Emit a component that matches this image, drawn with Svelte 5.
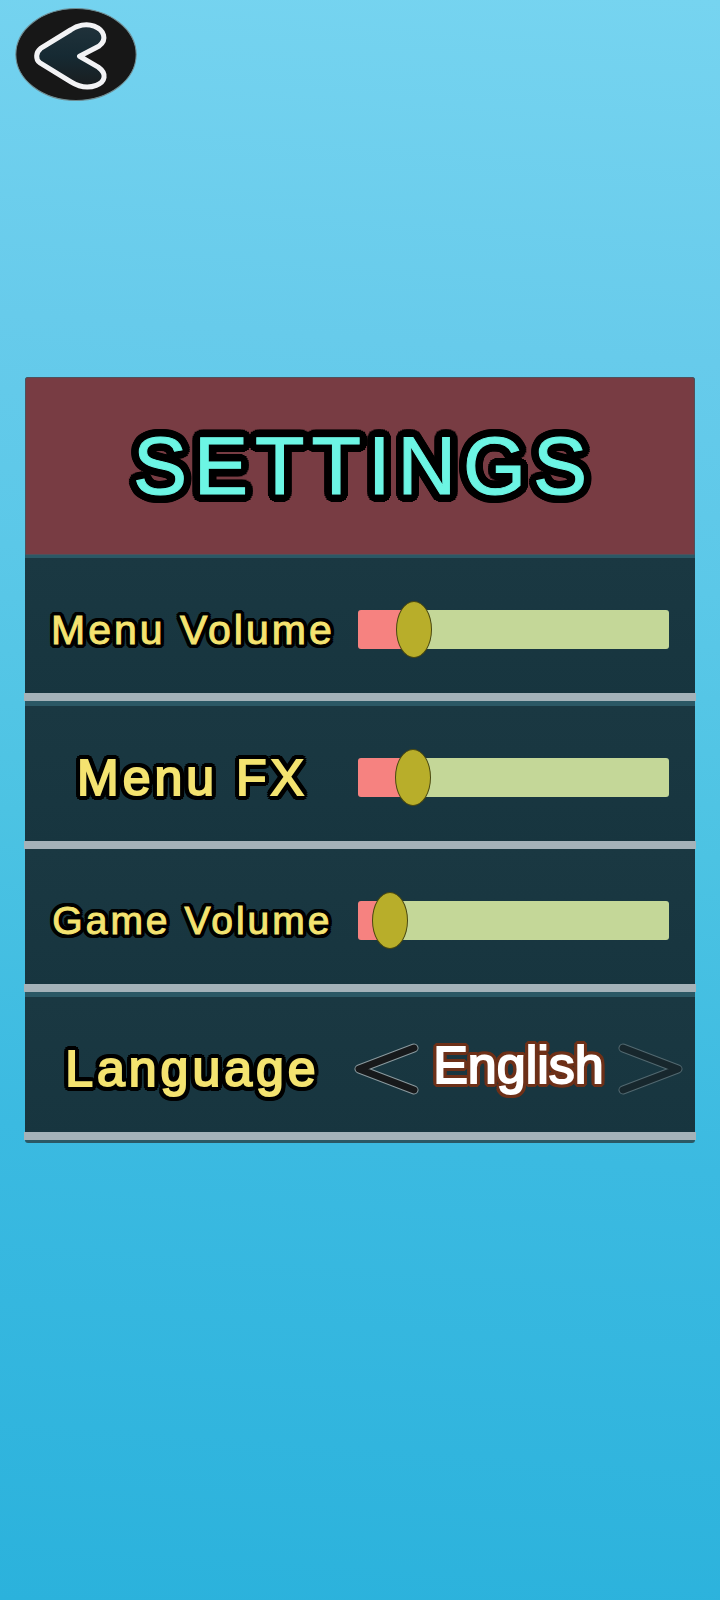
<script>
    //* local reactive variables
    let volumes = [
        {id: 'menu-volume', label: 'Menu Volume', size: 'medium', value: 13.8},
        {id: 'menu-fx', label: 'Menu FX', size: 'large', value: 13.4},
        {id: 'game-volume', label: 'Game Volume', size: 'small', value: 5.1},
    ];

    const languages = ['English', 'Deutsch', 'Español'];
    let current = 0;

    //* event handlers
    function step(offset) {
        current = (current + offset + languages.length) % languages.length;
    }
</script>

<main>
    <button type="button" class="back" aria-label="Back">
        <svg viewBox="0 0 120 92">
            <defs>
                <linearGradient id="back-fill" x1="0" y1="0" x2="0" y2="1">
                    <stop offset="0" stop-color="#20323b" />
                    <stop offset="0.5" stop-color="#162a33" />
                    <stop offset="1" stop-color="#191d1f" />
                </linearGradient>
            </defs>
            <ellipse cx="60" cy="46" rx="59.5" ry="45.5" fill="#171717" stroke="#6f8c92" />
            <path
                d="M25 40 L55 21.5 C61 17.500 70 15 78 18 C88 22 91 31 83 37.500 L63.500 47.700 L82 58.500 C91 65 89 73 80 76.500 C72 79.500 63 78 55 73 L24 54 C20 51 20 44 25 40 Z"
                fill="url(#back-fill)"
                stroke="#f3f3f5"
                stroke-width="5"
                stroke-linejoin="round"
            />
        </svg>
    </button>

    <section class="panel">
        <header>
            <h1>SETTINGS</h1>
        </header>

        {#each volumes as item (item.id)}
            <div class="row" class:joined={item.id === 'game-volume'}>
                <label class="name {item.size}" for={item.id}>{item.label}</label>
                <input
                    id={item.id}
                    type="range"
                    min="0"
                    max="100"
                    step="0.1"
                    bind:value={item.value}
                    style="--level: {item.value}%"
                />
            </div>
        {/each}

        <div class="row">
            <span class="name large" id="language">Language</span>
            <div class="picker" role="group" aria-labelledby="language">
                <button type="button" aria-label="Previous language" on:click={() => step(-1)}>
                    <svg viewBox="0 0 66 52">
                        <path class="edge" d="M61 5 L6 26 L61 47" />
                        <path class="core" d="M61 5 L6 26 L61 47" />
                    </svg>
                </button>
                <output>{languages[current]}</output>
                <button type="button" class="faded" aria-label="Next language" on:click={() => step(1)}>
                    <svg viewBox="0 0 66 52">
                        <path class="edge" d="M5 5 L60 26 L5 47" />
                        <path class="core" d="M5 5 L60 26 L5 47" />
                    </svg>
                </button>
            </div>
        </div>
    </section>
</main>

<style>
    :global(body) {
        margin: 0;
        font-family: "Liberation Sans", Arial, sans-serif;
    }

    main {
        box-sizing: border-box;
        min-height: 100vh;
        padding: 8px 25px;
        background: linear-gradient(184deg, #76d4f0, #67cbeb 22%, #5bc8e8 36%, #4cc3e3 52%, #3bbae1 71%, #2bb2dc);
    }

    button {
        padding: 0;
        border: 0;
        background: none;
        cursor: pointer;
    }

    svg {
        display: block;
        width: 100%;
    }

    .back {
        display: block;
        width: 122px;
        margin-left: -10px;
    }

    .back svg {
        height: 93px;
    }

    .panel {
        display: flex;
        flex-direction: column;
        gap: 5px;
        margin-top: 276px;
        padding-bottom: 3px;
        border-radius: 3px;
        background: #2b5865;
    }

    header {
        display: flex;
        align-items: center;
        justify-content: center;
        height: 176px;
        margin-bottom: -2px;
        padding-left: 7px;
        border: solid 1px #50505b;
        border-radius: 3px 3px 0 0;
        background: #783c43;
    }

    h1 {
        margin: 0;
        color: #6cf5e4;
        font-size: 81px;
        font-weight: 400;
        line-height: 92px;
        letter-spacing: 7px;
        -webkit-text-stroke: 1px #6cf5e4;
        text-shadow:
            8px 0 #000, -8px 0 #000, 0 8px #000, 0 -8px #000,
            8px 2px #000, 8px -2px #000, -8px 2px #000, -8px -2px #000,
            7px 4px #000, 7px -4px #000, -7px 4px #000, -7px -4px #000,
            6px 6px #000, 6px -6px #000, -6px 6px #000, -6px -6px #000,
            4px 7px #000, 4px -7px #000, -4px 7px #000, -4px -7px #000,
            2px 8px #000, 2px -8px #000, -2px 8px #000, -2px -8px #000,
            4px 0 #000, -4px 0 #000, 0 4px #000, 0 -4px #000;
    }

    .row {
        position: relative;
        display: grid;
        grid-template-columns: minmax(0, 10fr) minmax(0, 11fr);
        gap: 24px;
        align-items: center;
        height: 143px;
        padding: 0 26px;
        background: linear-gradient(#1a3842, #17353f);
    }

    .row.joined {
        margin-top: -5px;
    }

    .row::after {
        content: "";
        position: absolute;
        right: -1px;
        bottom: 0;
        left: -1px;
        height: 8px;
        background: #a4b2b9;
    }

    .name {
        color: #f4e370;
        line-height: 56px;
        letter-spacing: 3px;
        text-align: center;
        white-space: nowrap;
        -webkit-text-stroke: 1px #f4e370;
        text-shadow:
            4px 0 #000, -4px 0 #000, 0 4px #000, 0 -4px #000,
            4px 2px #000, 4px -2px #000, -4px 2px #000, -4px -2px #000,
            3px 3px #000, 3px -3px #000, -3px 3px #000, -3px -3px #000,
            2px 4px #000, 2px -4px #000, -2px 4px #000, -2px -4px #000,
            2px 0 #000, -2px 0 #000, 0 2px #000, 0 -2px #000;
    }

    .small {
        font-size: 39px;
    }

    .medium {
        font-size: 41px;
    }

    .large {
        font-size: 50px;
        letter-spacing: 4px;
        -webkit-text-stroke: 2px #f4e370;
        text-shadow:
            5px 0 #000, -5px 0 #000, 0 5px #000, 0 -5px #000,
            5px 2px #000, 5px -2px #000, -5px 2px #000, -5px -2px #000,
            4px 4px #000, 4px -4px #000, -4px 4px #000, -4px -4px #000,
            2px 5px #000, 2px -5px #000, -2px 5px #000, -2px -5px #000,
            2px 0 #000, -2px 0 #000, 0 2px #000, 0 -2px #000;
    }

    input {
        width: 100%;
        height: 56px;
        margin: 0;
        background: none;
        appearance: none;
        cursor: pointer;
    }

    input::-webkit-slider-runnable-track {
        height: 39px;
        border-radius: 3px;
        background: linear-gradient(90deg, #f68280 calc(var(--level) + 12px), #c4d798 calc(var(--level) + 12px));
    }

    input::-webkit-slider-thumb {
        box-sizing: border-box;
        width: 36px;
        height: 57px;
        margin-top: -9px;
        border: solid 1px #4a4810;
        border-radius: 50%;
        background: #b8ae2a;
        appearance: none;
    }

    .picker {
        display: flex;
        align-items: center;
        justify-content: space-between;
        margin: 0 -15px 0 -5px;
    }

    .picker button {
        flex: none;
        width: 66px;
    }

    .picker path {
        fill: none;
        stroke-linecap: round;
        stroke-linejoin: round;
    }

    .edge {
        stroke: #8b9a9f;
        stroke-width: 9px;
    }

    .core {
        stroke: #17191b;
        stroke-width: 7px;
    }

    .faded {
        opacity: 0.5;
    }

    output {
        padding-bottom: 8px;
        color: #fff;
        font-size: 52px;
        line-height: 56px;
        -webkit-text-stroke: 2px #fff;
        text-shadow:
            4px 0 #6d3018, -4px 0 #6d3018, 0 4px #6d3018, 0 -4px #6d3018,
            4px 2px #6d3018, 4px -2px #6d3018, -4px 2px #6d3018, -4px -2px #6d3018,
            3px 3px #6d3018, 3px -3px #6d3018, -3px 3px #6d3018, -3px -3px #6d3018,
            2px 4px #6d3018, 2px -4px #6d3018, -2px 4px #6d3018, -2px -4px #6d3018;
    }
</style>
